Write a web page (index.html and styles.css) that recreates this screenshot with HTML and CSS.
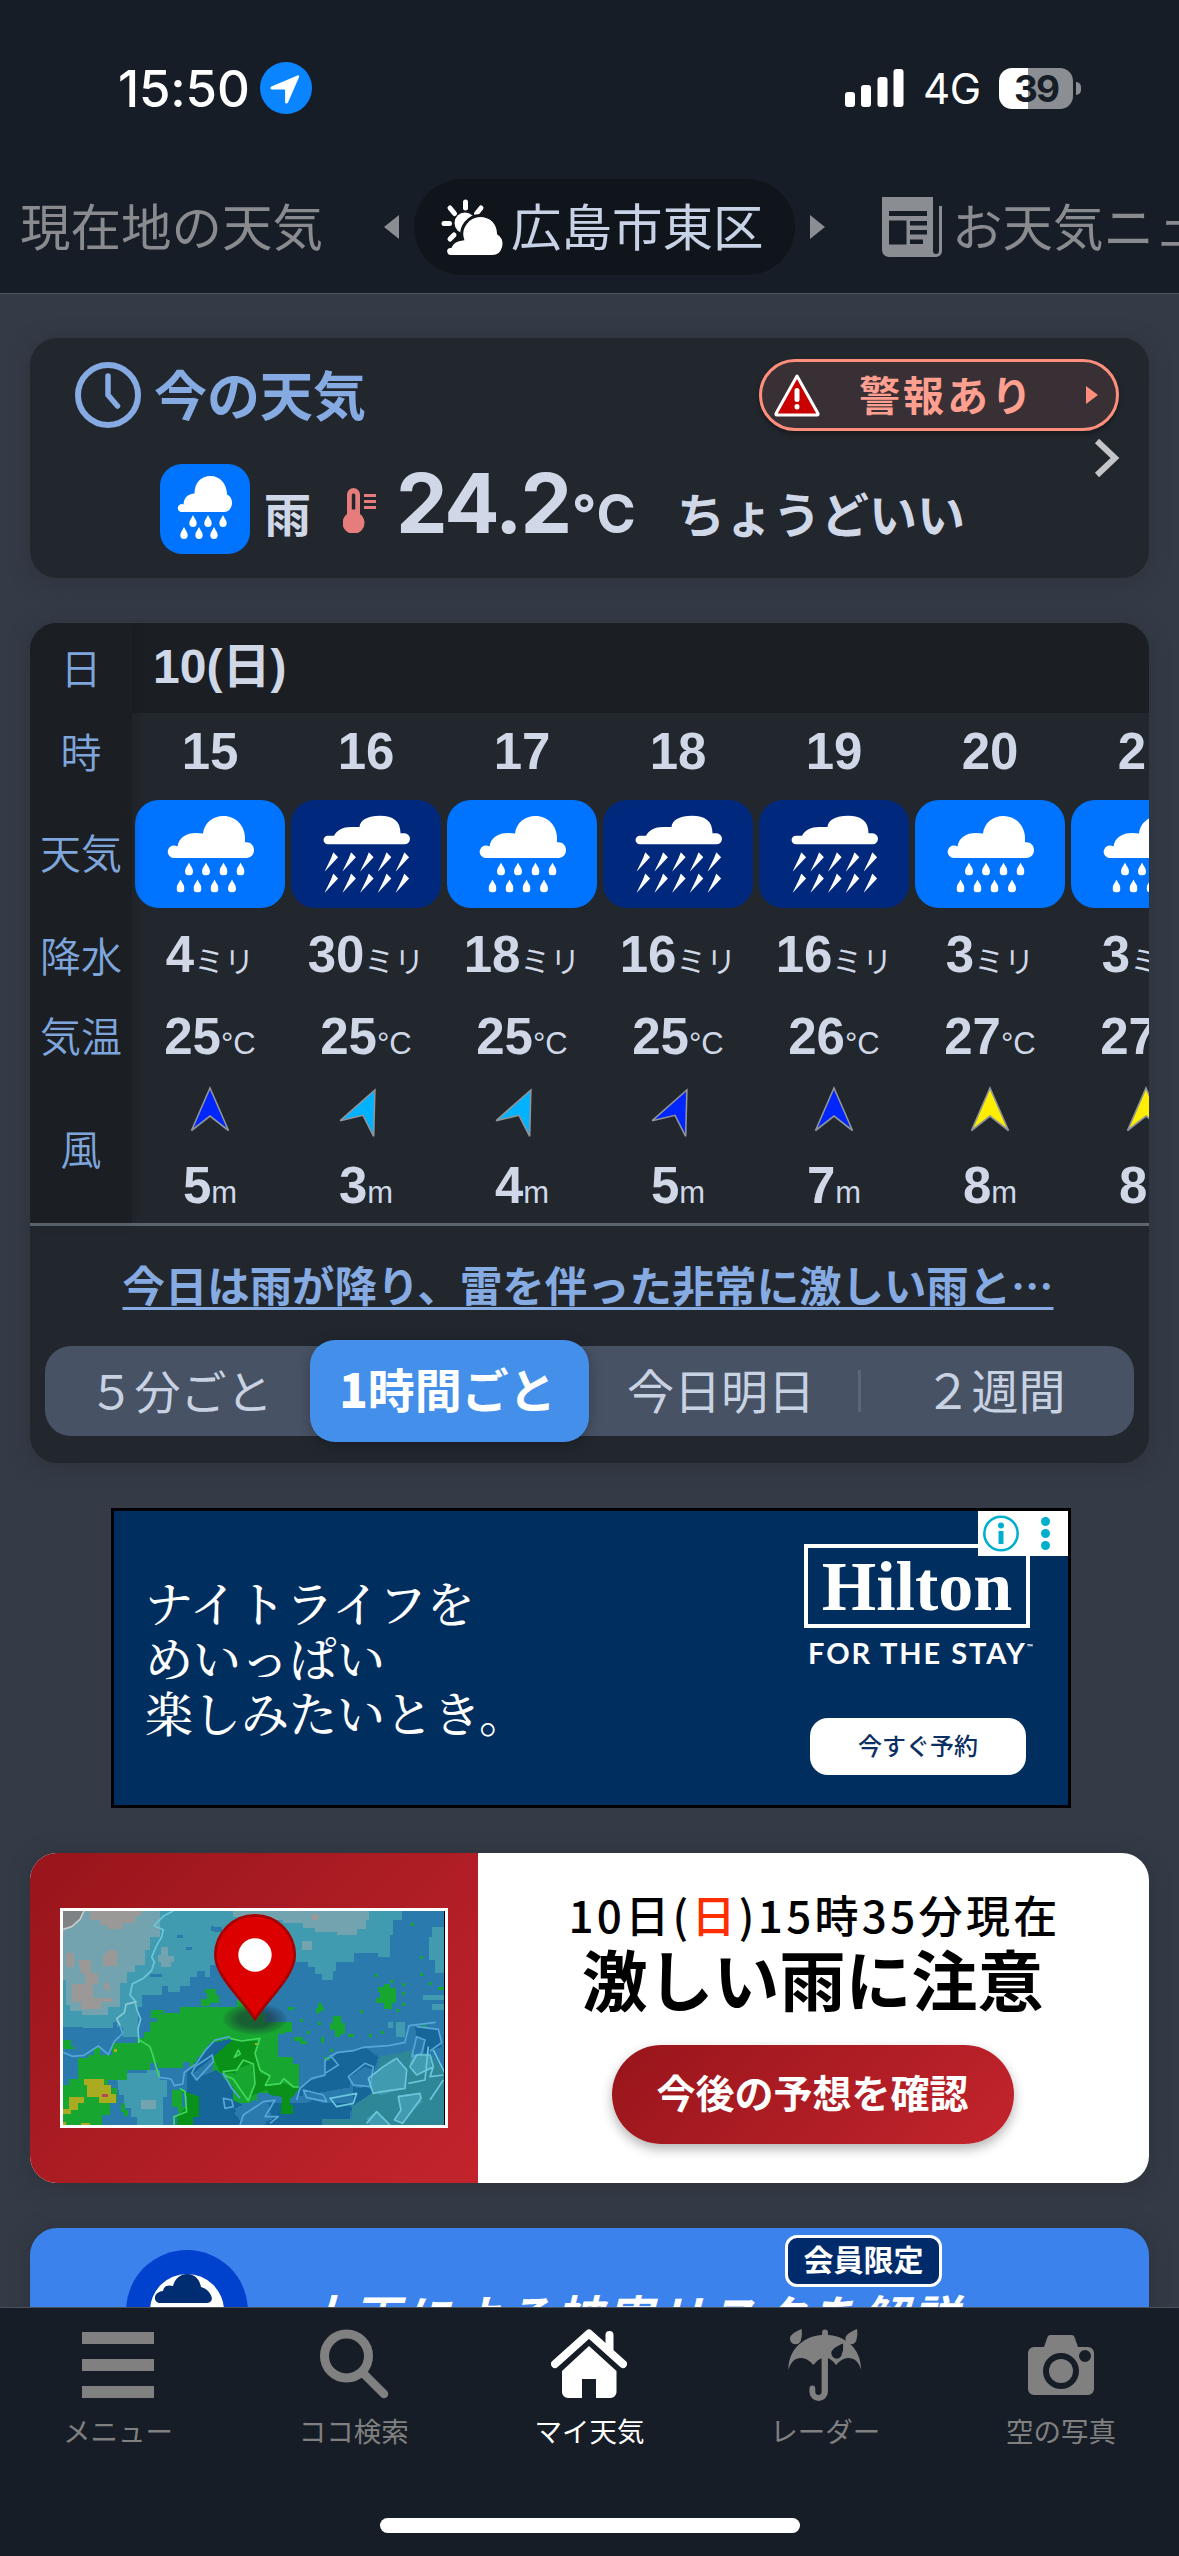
FILE: index.html
```html
<!DOCTYPE html>
<html lang="ja">
<head>
<meta charset="utf-8">
<title>マイ天気</title>
<link rel="stylesheet" href="styles.css">
</head>
<body>
<svg class="defs" width="0" height="0" aria-hidden="true">
  <symbol id="drop" viewBox="0 0 8 13"><path d="M4 0C5.5 3.500 8 5.500 8 9a4 4 0 0 1-8 0C0 5.500 2.500 3.500 4 0z"/></symbol>
  <symbol id="rain" viewBox="0 0 150 108">
    <path fill="#fff" d="M39.500 58a6.300 6.300 0 1 1 3-11.500C44 37.500 51 33 61 33q3.500 0 7 .6C69 23 78 16 88.500 16 101 16 110 26 110 38v4.200c5.500-.6 9 3 9 8s-4 7.800-8.500 7.800z"/>
    <g fill="#fff">
      <use href="#drop" x="50" y="62.500" width="8" height="13"/><use href="#drop" x="67" y="62.500" width="8" height="13"/><use href="#drop" x="84.500" y="62.500" width="8" height="13"/><use href="#drop" x="101.500" y="62.500" width="8" height="13"/>
      <use href="#drop" x="41.500" y="79.500" width="8" height="13"/><use href="#drop" x="58.500" y="79.500" width="8" height="13"/><use href="#drop" x="75.500" y="79.500" width="8" height="13"/><use href="#drop" x="93" y="79.500" width="8" height="13"/>
    </g>
  </symbol>
  <symbol id="bolt" viewBox="0 0 14 20"><path d="M8.800 0 13.600 5 0 19.500 6.500 6z"/></symbol>
  <symbol id="storm" viewBox="0 0 150 108">
    <path fill="#fff" d="M37.500 44.300a4.300 4.300 0 1 1 0-8.500h5.500C46 30 52 27 60 27h8.500C69 20 77 15.800 89 15.800c13 0 20.500 5.200 20.500 17.500h4a5.300 5.300 0 1 1 0 11z"/>
    <g fill="#fff">
      <use href="#bolt" x="33.500" y="52.300" width="14" height="20"/><use href="#bolt" x="51.300" y="52.300" width="14" height="20"/><use href="#bolt" x="69" y="52.300" width="14" height="20"/><use href="#bolt" x="86.700" y="52.300" width="14" height="20"/><use href="#bolt" x="104.500" y="52.300" width="14" height="20"/>
      <use href="#bolt" x="33.500" y="73.600" width="14" height="20"/><use href="#bolt" x="51.300" y="73.600" width="14" height="20"/><use href="#bolt" x="69" y="73.600" width="14" height="20"/><use href="#bolt" x="86.700" y="73.600" width="14" height="20"/><use href="#bolt" x="104.500" y="73.600" width="14" height="20"/>
    </g>
  </symbol>
  <symbol id="wind" viewBox="0 0 40 46"><path d="M20 2 38.500 44.500 20 30 1.500 44.500z" stroke="#8f9499" stroke-width="1.600"/></symbol>
</svg>

<header class="top">
  <div class="status">
    <span class="clock">15:50</span>
    <svg class="locate" width="52" height="52" viewBox="0 0 52 52"><circle cx="26" cy="26" r="26" fill="#0a84ff"/><path fill="#fff" d="M37.500 13.500c1.200-.5 2 .4 1.600 1.500L28 40.500c-.8 1.600-2.900 1.200-2.900-.6V28.500c0-.8-.3-1-1-1H12c-1.800 0-2.100-2.100-.6-2.900z"/></svg>
    <svg class="signal" width="59" height="38" viewBox="0 0 59 38" fill="#fff"><rect y="23" width="10" height="15" rx="3"/><rect x="16" y="16" width="10" height="22" rx="3"/><rect x="32.500" y="8" width="10" height="30" rx="3"/><rect x="48.500" width="10" height="38" rx="3"/></svg>
    <span class="network">4G</span>
    <div class="battery">39</div><i class="nub"></i>
  </div>
  <nav class="places">
    <span class="place first">現在地の天気</span>
    <svg class="prev" width="15" height="24" viewBox="0 0 15 24"><path fill="#8a8d92" d="M15 0v24L0 12z"/></svg>
    <span class="current">
      <svg width="62" height="56" viewBox="0 0 62 56">
        <g stroke="#fff" stroke-width="5" stroke-linecap="round"><path d="M24.500 3v6M9 9l4.500 5.500M40 9l-4.500 5.500M3 24.500h5.500M9 40l4-4"/></g>
        <circle cx="24" cy="24" r="10.500" fill="#fff"/>
        <path fill="#fff" stroke="#10151b" stroke-width="3" d="M10 57.500c-6 0-8-9.500-.5-10 2-4.500 6-7 12-7.500C18 28 28 16.500 39 16.500S57 24 57.500 34.500c10 7 5 23-6 23z"/>
      </svg>
      <b>広島市東区</b>
    </span>
    <svg class="next" width="15" height="24" viewBox="0 0 15 24"><path fill="#8a8d92" d="M0 0v24l15-12z"/></svg>
    <svg class="news" width="61" height="60" viewBox="0 0 61 60"><path fill="#8a8d92" fill-rule="evenodd" d="M0 0h51v54a3 3 0 0 0 6 0V9h3v45a6 6 0 0 1-6 6H7a7 7 0 0 1-7-7zM7 14v5h38v-5zM7 23.500v24h17.500v-24zM28 24v4.500h17V24zM28 33v4.500h17V33zM28 42.500V47h13v-4.500z"/></svg>
    <span class="place">お天気ニュース</span>
  </nav>
</header>

<main>
  <section class="card now">
    <div class="now-body">
      <div class="now-head">
        <svg width="66" height="66" viewBox="0 0 66 66" fill="none" stroke="#86abe2"><circle cx="33" cy="33" r="30" stroke-width="6"/><path d="M33 14v19l9.500 11" stroke-width="5.500" stroke-linecap="round"/></svg>
        <h2>今の天気</h2>
        <div class="alert">
          <svg width="48" height="44" viewBox="0 0 48 44"><path fill="#c80000" stroke="#fff" stroke-width="3" stroke-linejoin="round" d="M24 3 45 40.500a1 1 0 0 1-1 1.500H4a1 1 0 0 1-1-1.500z"/><path stroke="#fff" stroke-width="5" stroke-linecap="round" d="M24 17.500v9M24 33.500v.5"/></svg>
          <span>警報あり</span>
          <svg width="12" height="18" viewBox="0 0 12 18"><path fill="#ff8e7c" d="M0 0v18l12-9z"/></svg>
        </div>
      </div>
      <div class="now-line">
        <svg class="now-icon" width="90" height="90" viewBox="0 0 90 90" fill="#fff"><rect width="90" height="90" rx="22" fill="#0074ff"/><path d="M22 48a4 4 0 1 1 1.500-7.600C24 33.500 28 30 34.500 29.500 34.500 19 41 12 50.500 12S67 20 67 30.500c3.500 1.500 5 4.500 5 8.500 0 5-3.500 9-8 9z"/><use href="#drop" x="29" y="51" width="8" height="12"/><use href="#drop" x="44" y="51" width="8" height="12"/><use href="#drop" x="59" y="51" width="8" height="12"/><use href="#drop" x="20" y="63" width="8" height="12"/><use href="#drop" x="35" y="63" width="8" height="12"/><use href="#drop" x="50" y="63" width="8" height="12"/></svg>
        <span class="sky">雨</span>
        <svg class="thermo" width="34" height="45" viewBox="0 0 34 45"><path fill="#e67c7c" fill-rule="evenodd" d="M4 6.500a6.500 6.500 0 0 1 13 0V26a11 11 0 1 1-13 0zM8.800 7v14.500h3.500V7a1.800 1.800 0 0 0-3.500 0z"/><path stroke="#e67c7c" stroke-width="3" d="M21 7.500h12M21 13.500h12M21 19.500h12"/></svg>
        <span class="temp">24.2</span><span class="deg">°C</span>
        <span class="feel">ちょうどいい</span>
      </div>
    </div>
    <svg class="chev" width="26" height="40" viewBox="0 0 26 40"><path d="M3 3l18 17L3 37" fill="none" stroke="#c4c5c8" stroke-width="6"/></svg>
  </section>

  <section class="card forecast">
    <div class="table">
      <div class="labels"><span class="l-day">日</span><span class="l-hour">時</span><span class="l-sky">天気</span><span class="l-rain">降水</span><span class="l-temp">気温</span><span class="l-wind">風</span></div>
      <div class="hours">
        <div class="day">10(日)</div>
        <div class="cols">
          <div class="col"><b class="h">15</b><svg class="tile"><use href="#rain"/></svg><p class="r"><b>4</b>ミリ</p><p class="t"><b>25</b>°C</p><svg class="w blue"><use href="#wind"/></svg><p class="s"><b>5</b>m</p></div>
          <div class="col"><b class="h">16</b><svg class="tile dark"><use href="#storm"/></svg><p class="r"><b>30</b>ミリ</p><p class="t"><b>25</b>°C</p><svg class="w cyan tilt"><use href="#wind"/></svg><p class="s"><b>3</b>m</p></div>
          <div class="col"><b class="h">17</b><svg class="tile"><use href="#rain"/></svg><p class="r"><b>18</b>ミリ</p><p class="t"><b>25</b>°C</p><svg class="w cyan tilt"><use href="#wind"/></svg><p class="s"><b>4</b>m</p></div>
          <div class="col"><b class="h">18</b><svg class="tile dark"><use href="#storm"/></svg><p class="r"><b>16</b>ミリ</p><p class="t"><b>25</b>°C</p><svg class="w blue tilt"><use href="#wind"/></svg><p class="s"><b>5</b>m</p></div>
          <div class="col"><b class="h">19</b><svg class="tile dark"><use href="#storm"/></svg><p class="r"><b>16</b>ミリ</p><p class="t"><b>26</b>°C</p><svg class="w blue"><use href="#wind"/></svg><p class="s"><b>7</b>m</p></div>
          <div class="col"><b class="h">20</b><svg class="tile"><use href="#rain"/></svg><p class="r"><b>3</b>ミリ</p><p class="t"><b>27</b>°C</p><svg class="w yellow"><use href="#wind"/></svg><p class="s"><b>8</b>m</p></div>
          <div class="col"><b class="h">21</b><svg class="tile"><use href="#rain"/></svg><p class="r"><b>3</b>ミリ</p><p class="t"><b>27</b>°C</p><svg class="w yellow"><use href="#wind"/></svg><p class="s"><b>8</b>m</p></div>
        </div>
      </div>
    </div>
    <a class="summary">今日は雨が降り、雷を伴った非常に激しい雨と…</a>
    <div class="segments">
      <span class="seg s1">５分ごと</span><span class="seg on"><b>1</b>時間ごと</span><span class="seg s3">今日明日</span><i></i><span class="seg s4">２週間</span>
    </div>
  </section>

  <section class="ad">
    <p class="copy">ナイトライフを<br>めいっぱい<br>楽しみたいとき。</p>
    <div class="brand">
      <div class="logo">Hilton</div>
      <div class="tag">FOR THE STAY<sup>™</sup></div>
      <div class="book">今すぐ予約</div>
    </div>
    <svg class="adchoice" width="90" height="45" viewBox="0 0 90 45"><path fill="#fff" d="M0 0h90v45H0z"/><circle cx="23" cy="22.500" r="16.700" fill="none" stroke="#00aecd" stroke-width="2.600"/><circle cx="23" cy="14.500" r="3" fill="#00aecd"/><path fill="#00aecd" d="M20.500 20h5v13h-5z"/><g fill="#00aecd"><circle cx="67.500" cy="10.500" r="4.500"/><circle cx="67.500" cy="22.500" r="4.500"/><circle cx="67.500" cy="34.500" r="4.500"/></g></svg>
  </section>

  <section class="card warn">
    <div class="mapbox">
      <svg class="map" width="382" height="214" viewBox="129 213 1146 642" preserveAspectRatio="none">
        <g shape-rendering="crispEdges">
          <path fill="#2a7aad" d="M129 213h1146v642H129z"/>
          <path fill="#409bb0" d="M129 213H1146V240H1120V285H1110V350H1075V340H1003V366H948V393H938V420H905V402H885V380H865V366H829V330H780V300H620V340H585V375H570V411H555V393H530V411H510V438H480V456H445V438H425V465H365V500H340V535H300V545H280V565H190V560H129z"/>
          <path fill="#73a3ae" d="M129 213H420V290H390V330H375V375H345V395H320V430H300V500H265V525H185V512H150V495H138V420H129zM640 213H1048V240H1038V268H1012V285H950V276H885V265H850V250H790V240H740V230H640zM422 320h22v28h18v18h-10v15h-30v-15h-8v-22h8zM846 303h30v28h-30z"/>
          <path fill="#9a9998" d="M210 213H362V228H345V248H310V268H262V256H240V240H210zM262 330h28v48h-40v-36h12zM175 360h38v38h20v35h-15v42h60v-22h-12v-24h-15v20h28v36h-36v22h-60v-20h-27v-54h40v-30h-12zM138 340h25v42h-25zM877 222h18v18h-18z"/>
          <path fill="#7e8285" d="M129 213H193L180 240 155 260 129 268z"/>
          <path fill="#409bb0" d="M1237 260h38v140h-30v-40h-18v-70h10zM290 700h90v-10h40v30h20v50h-10v85H350V830h-18v-25h-20v-40h-15zM1128 545h28v45h-28zM1103 545h15v18h-15zM1210 465h65v15h-65zM1237 492h38v18h-38zM300 500h54v90H310v-30h-20v-30h10z"/>
          <path fill="#17a62f" d="M430 520H480V500H590V502H650V480H690V520H735V545H815V575H795V582H775V650H820V672H838V740H785V760H710V790H640V740H610V700H580V650H530V680H510V665H490V685H415V670H390V690H265V720H320V690H340V690H265V745H290V790H270V825H245V855H129V735H148V718H175V655H205V645H222V620H240V645H275V610H350V595H372V577H390V545H410V528z"/>
          <path fill="#17a62f" d="M555 448h32v18h10v22h-28v10h-25v-20h18v-18h-7zM1075 440h18v-8h18v12h18v46h-12v18h-26v-20h-24v-15h12v-18h-4zM938 528h26v20h12v34h-15v8h-16v-20h-15v-22h8zM893 490h12v12h6v12h-12v5h-12v-15h6zM1200 348h9v9h-9zM1172 248h9v9h-9zM1066 402h9v9h-9zM1110 420h9v9h-9zM1145 430h9v9h-9zM1200 400h9v9h-9zM1228 425h9v9h-9zM1254 440h18v9h-18zM1145 456h9v9h-9zM1145 490h9v9h-9zM1128 508h9v9h-9zM1020 510h9v9h-9zM803 502h18v8h-18zM840 536h9v9h-9zM860 573h9v9h-9zM895 545h9v9h-9zM903 590h9v18h-9zM822 590h28v14h12v9h-22v-9h-18zM985 582h18v9h-18zM1048 582h9v9h-9zM1083 572h9v9h-9zM930 626h9v9h-9zM912 652h18v9h-18zM1210 555h9v9h-9zM395 510h36v10h-12v15h-28zM129 600h24v20h12v8h-36zM455 750h30v50h20v20h-30v-20h-20zM305 790h10v20h10v18h-12v-12h-10z"/>
          <path fill="#176699" d="M500 700L570 610 640 595 640 625 600 655 580 650 530 715 590 690 640 745 640 780 680 800 640 820 680 855H500V790zM830 770L860 725 915 710 915 670 960 635 1040 625 1075 650 1060 700 990 710 990 740 1045 740 1060 765 1010 800 940 800 880 780 830 800 790 830 700 855H900L1000 810V740z"/>
          <path fill="#176699" d="M745 790H990V840H905V855H760zM1185 560l70 10 10 50-50 20-20-20z"/>
          <path fill="#2d8796" d="M1080 650l100-20 60 20 35 50v155H905V837h90V800l60-40z"/>
          <path fill="#0a9119" d="M580 650L640 598 715 605 705 640 720 700 750 710 740 740 790 730 838 745 815 775 750 765 740 750 690 770 690 720 640 700 600 700zM480 750l20 20v30l-30 30v25h50v-25h18v-60zM785 770h25v25h10v28h-36z"/>
          <path fill="#409bb0" d="M1060 700l60-45 40 30-5 60-75 20-35-25zM1180 640l50 10 5 40-50 10-15-30zM1135 765l65-5 5 25-60 65-25-10 20-25zM1040 835l30-20 40 40h-60z"/>
          <path fill="#2a7aad" d="M645 805l60-25 50 25-20 50h-70zM1190 590l25 10-5 40-30 10zM985 715l50-35 25 10-10 50-40 5zM850 755l60 10-10 20-50-10zM520 700l55-45 5 25-50 40z"/>
          <path fill="#17a62f" d="M645 690l50-20 8 70-15 50-30-30 10-20-20-30z"/>
          <path fill="#aaab20" d="M193 718h60v18h20v27h15v27h-50V772h-38v-36h-7zM146 772h45v18h-18v20h-20v12h-24v-15h17zM282 627h9v9h-9zM129 845h8v10h-8zM183 850h27v5h-27zM705 608h8v8h-8z"/>
          <path fill="#b04a50" d="M246 762h18v9h-18z"/>
          <path fill="#73a3ae" d="M362 780h45v28h-45z"/>
          <path fill="#2a7aad" d="M1228 303h-10v20h10zM498 320h18v9h-18zM470 285h18v9h-18zM573 258h9v14h-9zM582 275h24v-13h-24zM390 402h36v9h-36z"/>
        </g>
        <g fill="none" stroke-width="5" stroke-linejoin="round">
          <path stroke="#c8cbcc" d="M129 268l26-8 25-22 12-25"/>
          <path stroke="#6bc6dc" d="M460 213l-28 14-30 30 28 12-5 22-15 25-15 35 8 15-8 25-25 24-33 17-7 33 15 17 5 25 12 30-8 30 3 42"/>
          <path stroke="#8bc9d5" d="M350 485l-32 8-5 25-23 18 10 20"/>
          <path stroke="#56a6d8" d="M300 556l8 25-25 23-18 40-30-26-28 18-15 10-35 3-28-12"/>
          <path stroke="#41d85c" d="M355 598l35 22 10 30 8 30 10 30"/>
          <path stroke="#56a6d8" d="M418 712l35 5 10 20 25-5 5-35 35-25 27-40 30-32 45-10"/>
          <path stroke="#41d85c" d="M630 595l35 8 55-8-15 45 15 50 30 18-14 28 45-5 10-15 30 25 15 0M655 630l-12 22 18-10zM610 695l40-5 20-30 30 12 5 60-20 50-25-35-20-30-28-12zM480 745l15 10 5 60-38 15v25"/>
          <path stroke="#56a6d8" d="M515 700l10-20 52-35 3 20-50 55zM610 700l25 45 25 30M830 780l10-35 35-30 40-10 0-45 35-22 50-6 30-10 75-5 50-10 12-50 80-10M850 750l60 15 10 20-60-12zM610 775l25 5 5 20-25 5zM660 855l10-30 60-40 35-5-30 50 40 0-25 20M1190 590l25 10-10 40-30 10zM1190 560l65 8 10 40-35 25M985 710l50-40 25 10-10 60-50-5zM915 700l40-25-25-30"/>
          <path stroke="#6bc6dc" d="M1060 760l-15-45 45-35 40-25 30 35-5 55-70 10zM1170 680l20-35 40 0 10 35-50 25zM1240 630l35 70M1225 620l-10 100-50 10M1200 760l-65 10 8 40-20 30 25 10 55-75zM930 775l80-15-10 30-50 10zM1040 850l30-35 40 40M1240 680l-10 30 40-5M1230 780l40-60"/>
        </g>
        <path fill="#000" d="M1272 213h3v642h-3z"/>
        <radialGradient id="sh"><stop offset=".5" stop-color="#1b3038" stop-opacity=".6"/><stop offset="1" stop-color="#1b3038" stop-opacity=".1"/></radialGradient>
        <ellipse cx="705" cy="537" rx="96" ry="46" fill="url(#sh)"/>
        <path fill="#dc0000" stroke="#a60000" stroke-width="8" d="M705 537C670 480 586 410 586 345a119 119 0 0 1 238 0C824 410 740 480 705 537z"/>
        <circle cx="705" cy="345" r="50" fill="#fff"/>
      </svg>
    </div>
    <div class="notice">
      <p class="when">10日(<em>日</em>)15時35分現在</p>
      <p class="what">激しい雨に注意</p>
      <div class="more">今後の予想を確認</div>
    </div>
  </section>

  <section class="card promo">
    <svg class="promo-icon" width="122" height="122" viewBox="0 0 122 122"><circle cx="61" cy="61" r="61" fill="#0041cd"/><circle cx="61" cy="61" r="37" fill="#fff"/><path fill="#002d72" d="M33 53c-6-1-6-11 4-12 1-6 6-6 10-5 2-8 8-12 14-12 9 0 13 7 14 13 9 2 16 15 6 16z"/></svg>
    <div class="promo-text"><span class="badge">会員限定</span><p>大雨による被害リスクを解説</p></div>
  </section>
</main>

<footer>
  <div class="tabs">
    <div class="tab"><svg width="72" height="72" viewBox="0 0 72 72" fill="#808080"><path d="M0 3h72v12H0zM0 30h72v12H0zM0 57h72v12H0z"/></svg><span>メニュー</span></div>
    <div class="tab"><svg width="72" height="72" viewBox="0 0 72 72" fill="none" stroke="#808080"><circle cx="28.500" cy="27" r="22" stroke-width="9"/><path d="M45 44l21 21" stroke-width="8.500" stroke-linecap="round"/></svg><span>ココ検索</span></div>
    <div class="tab active"><svg width="76" height="72" viewBox="0 0 76 72" fill="#fff"><path d="M4 35 38 4.500 72 35" fill="none" stroke="#fff" stroke-width="8" stroke-linecap="round" stroke-linejoin="round"/><path d="M54.500 6a4 4 0 0 1 8 0v20l-8-7zM38 17 65.500 42v21a6 6 0 0 1-6 6H45V50H31v19H17a6 6 0 0 1-6-6V42z"/></svg><span>マイ天気</span></div>
    <div class="tab"><svg width="76" height="74" viewBox="0 0 76 74"><path fill="#808080" fill-rule="evenodd" d="M.5 42C0 21 17 6 38 6s37.500 15 37 36c-4-16-18-15-25.500-5-4-5-6-6-8.500-7v34.500a9.500 9.500 0 0 1-19 0V61a3 3 0 0 1 6 0v3.500a3.200 3.200 0 0 0 6.500 0V30c-3 1-5 3-8.500 7C18.500 27 4.500 26 .5 42zM56.500 15c-7 3-12 6-12 10a5.500 5.500 0 0 0 11 0c1.500-3 1.200-6 1-10z"/><path fill="#808080" d="M35 8V3.500a3 3 0 0 1 6 0V8zM14 0C7 3 2 6 2 10a5.700 5.700 0 0 0 11.500 0c1-3 .8-6 .5-10zM71 0C64 3 59 6 59 10a5.700 5.700 0 0 0 11.500 0c1-3 .8-6 .5-10z"/></svg><span>レーダー</span></div>
    <div class="tab"><svg width="66" height="72" viewBox="0 0 66 72"><path fill="#808080" fill-rule="evenodd" d="M6 18h10l3.500-10q.6-2 3-2h21q2.500 0 3 2L50 18h10a6 6 0 0 1 6 6v36a6 6 0 0 1-6 6H6a6 6 0 0 1-6-6V24a6 6 0 0 1 6-6zM33 24a18 18 0 1 0 0 36 18 18 0 0 0 0-36zM57 21a6 6 0 1 0 0 12 6 6 0 0 0 0-12z"/><circle cx="33" cy="42" r="12" fill="#808080"/></svg><span>空の写真</span></div>
  </div>
  <div class="home"></div>
</footer>
</body>
</html>
```
FILE: styles.css
```css
* { box-sizing: border-box; }
body {
  margin: 0; width: 1179px; height: 2556px; overflow: hidden;
  display: flex; flex-direction: column;
  background: #343b46; color: #d0d8e8;
  font-family: "Liberation Sans", "Noto Sans CJK JP", sans-serif;
}
h2, p { margin: 0; }
svg { display: block; flex: none; }
.defs { position: absolute; }

.top { height: 294px; flex: none; background: #161d26; border-bottom: 1px solid #50565e; }
.status { height: 176px; display: flex; align-items: center; padding: 0 98px 0 118px; color: #fff; font-family: Inter, sans-serif; }
.clock { width: 142px; font-size: 51px; font-weight: 550; letter-spacing: -.2px; white-space: nowrap; }
.signal { margin-left: auto; }
.network { width: 75px; padding-left: 19px; font-size: 42px; font-weight: 400; letter-spacing: -.5px; }
.battery { width: 74px; height: 41px; margin-left: 20px; border-radius: 13px; background: linear-gradient(90deg, #fff 29px, #8b8e93 29px); color: #161d26; text-align: center; font-size: 37px; line-height: 41px; font-weight: 700; letter-spacing: -2px; }
.nub { width: 5px; height: 13px; margin-left: 3px; background: #8b8e93; border-radius: 0 6px 6px 0; }
.places { height: 102px; display: flex; align-items: center; overflow: hidden; padding-left: 20px; color: #8a8b8f; font-family: "Noto Sans CJK JP", sans-serif; font-size: 50.500px; line-height: 94px; white-space: nowrap; }
.places > * { flex: none; }
.place { padding-bottom: 6px; }
.first { width: 364px; }
.current { display: flex; align-items: center; width: 381px; height: 96px; margin-left: 15px; padding-left: 27px; border-radius: 48px; background: #10151b; color: #c8d2e6; }
.current b { font-weight: 400; margin-left: 8px; padding-bottom: 6px; }
.next { margin-left: 15px; }
.news { margin: 0 9px 0 57px; }

main { flex: 1; min-height: 0; overflow: hidden; display: flex; flex-direction: column; gap: 45px; padding: 44px 30px 0; }
.card { flex: none; border-radius: 27px; overflow: hidden; background: #22272e; box-shadow: 0 3px 20px rgba(40, 40, 48, .5); }

.now { height: 240px; display: flex; align-items: center; justify-content: space-between; padding-right: 29px; }
.now-body { width: 1060px; height: 240px; padding: 21px 0 0 45px; }
.now-head { display: flex; align-items: center; height: 72px; width: 1044px; }
.now-head h2 { flex: 1; margin-left: 13px; color: #86abe2; font: 700 53px/66px "Noto Sans CJK JP", sans-serif; padding-bottom: 4px; }
.alert { flex: none; width: 360px; height: 72px; display: flex; align-items: center; padding: 0 0 0 11px; border: 3px solid #ff8e7c; border-radius: 36px; background: #393036; box-shadow: 0 3px 5px rgba(0, 0, 0, .35); }
.alert span { width: 227px; color: #ff9f8f; font: 700 41px/60px "Noto Sans CJK JP", sans-serif; letter-spacing: 3px; margin-left: 38px; padding-bottom: 5px; }
.now-line { display: flex; align-items: center; height: 90px; margin: 33px 0 0 85px; font-family: "Noto Sans CJK JP", sans-serif; line-height: 60px; white-space: nowrap; }
.sky { width: 63px; margin-left: 14px; font-size: 47px; font-weight: 700; padding-top: 6px; }
.thermo { margin: 3px 19px 0 16px; }
.temp { width: 176px; font: 700 82px/60px Inter, sans-serif; letter-spacing: -2px; padding-bottom: 11px; }
.deg { width: 105px; font: 700 53px/60px Inter, sans-serif; letter-spacing: 1px; padding-top: 9px; }
.feel { font-size: 48px; font-weight: 600; padding-top: 5px; }

.forecast { height: 840px; }
.table { display: flex; height: 603px; border-bottom: 3px solid #5d666f; }
.labels { flex: none; position: relative; z-index: 1; width: 102px; display: flex; flex-direction: column; background: #1b1f24; box-shadow: 2px 0 12px rgba(0, 0, 0, .15); color: #7fa6dc; font: 350 41px/50px "Noto Sans CJK JP", sans-serif; text-align: center; }
.labels span { display: flex; align-items: center; justify-content: center; padding-bottom: 9px; }
.l-day { height: 94px; }
.l-hour { height: 74px; }
.l-sky { height: 129px; }
.l-rain { height: 77px; }
.l-temp { height: 82px; }
.l-wind { flex: 1; }
.hours { flex: 1; min-width: 0; overflow: hidden; }
.day { height: 90px; padding-left: 21px; background: #1b1f24; font-size: 48px; font-weight: 700; line-height: 87px; }
.cols { display: flex; }
.col { flex: none; width: 156px; display: flex; flex-direction: column; align-items: center; font-size: 31px; white-space: nowrap; }
.col b { font-size: 51px; }
.h { height: 87px; line-height: 77px; }
.tile { width: 150px; height: 108px; border-radius: 24px; background: #0074ff; }
.tile.dark { background: #00297d; }
.r { height: 92px; line-height: 94px; font-size: 30px; }
.t { height: 71px; line-height: 73px; }
.w { width: 40px; height: 46px; margin: 15px 0 16px; }
.s { height: 75px; line-height: 75px; }
.blue { fill: #0025ff; }
.cyan { fill: #00b2ff; }
.yellow { fill: #ffee00; }
.tilt { transform: rotate(25deg); }

.summary { display: block; height: 114px; padding: 27px 3px 0 0; text-align: center; color: #86abe2; font: 600 42.400px/62px "Noto Sans CJK JP", sans-serif; white-space: nowrap; text-decoration: underline; text-decoration-thickness: 3px; text-underline-offset: 5px; }
.segments { display: flex; align-items: center; height: 90px; margin: 6px 15px 0; border-radius: 26px; background: #475264; color: #c8d2e2; font: 400 46px/80px "Noto Sans CJK JP", sans-serif; white-space: nowrap; }
.seg { text-align: center; padding-bottom: 4px; }
.s1 { width: 265px; padding-left: 6px; font-size: 46px; }
.on { width: 279px; height: 102px; line-height: 96px; border-radius: 25px; background: #438fea; color: #fff; font-weight: 700; font-size: 47px; padding-right: 4px; box-shadow: 0 3px 14px rgba(0, 0, 0, .25); }
.s3 { width: 269px; padding-right: 5px; font-size: 47px; }
.segments i { width: 3px; height: 42px; background: #5b6676; }
.s4 { flex: 1; padding-right: 5px; font-size: 47px; }

.ad { flex: none; position: relative; width: 960px; height: 300px; margin-left: 81px; display: flex; justify-content: space-between; border: 3px solid #000; background: #002e5f; color: #fff; }
.copy { margin: 67px 0 0 31px; font: 500 48px/55px "Liberation Serif", "Noto Serif CJK JP", "Noto Sans CJK JP", serif; }
.brand { width: 232px; margin-right: 32px; padding-top: 33px; }
.logo { width: 226px; height: 84px; border: 4px solid #fff; font: 700 70px/78px "Liberation Serif", serif; text-align: center; }
.tag { display: flex; margin: 9px 0 0 4px; font: 700 29px/32px Lato, sans-serif; letter-spacing: 1.900px; white-space: nowrap; }
.tag sup { font-size: 8px; line-height: 20px; letter-spacing: 0; }
.book { width: 216px; height: 57px; margin: 49px 0 0 6px; border-radius: 18px; background: #fff; color: #0c2f63; font: 500 24px/53px "Noto Sans CJK JP", sans-serif; text-align: center; }
.adchoice { position: absolute; right: 0; top: 0; }

.warn { height: 330px; display: flex; background: #fff; color: #000; font-family: "Noto Sans CJK JP", sans-serif; }
.mapbox { width: 448px; padding: 55px 30px; background: linear-gradient(135deg, #98151b, #c3242c); }
.map { box-sizing: content-box; border: 3px solid #fff; }
.notice { flex: 1; display: flex; flex-direction: column; align-items: center; padding: 29px 2px 0 0; white-space: nowrap; }
.when { font-size: 44px; font-weight: 500; line-height: 64px; letter-spacing: 3.300px; padding-left: 4px; }
.when em { color: #ff2e00; font-style: normal; }
.what { font-size: 66px; font-weight: 700; line-height: 66px; position: relative; top: -2px; }
.more { width: 402px; height: 99px; margin-top: 33px; border-radius: 50px; background: linear-gradient(135deg, #98151b, #c3242c); color: #fff; font-size: 39px; font-weight: 700; line-height: 92px; text-align: center; box-shadow: 0 5px 12px rgba(0, 0, 0, .3); }

.promo { height: 330px; display: flex; background: #3b82ec; }
.promo-icon { margin: 22px 0 0 96px; }
.promo-text { margin: 7px 0 0 38px; white-space: nowrap; }
.badge { display: block; width: 157px; height: 52px; margin-left: 499px; border: 3px solid #fff; border-radius: 12px; background: #002b6b; color: #fff; font: 700 30px/41px "Noto Sans CJK JP", sans-serif; text-align: center; }
.promo p { color: #fff; font: italic 700 46px/60px "Noto Sans CJK JP", sans-serif; letter-spacing: 5px; margin: -3px 0 0 16px; }

footer { height: 249px; flex: none; border-top: 1px solid #4b5159; background: #161d26; }
.tabs { display: flex; height: 210px; padding-top: 21px; }
.tab { flex: 1; display: flex; flex-direction: column; align-items: center; color: #808080; font: 400 27.500px/36px "Noto Sans CJK JP", sans-serif; }
.tab svg { height: 72px; }
.tab span { margin-top: 11px; }
.active { color: #fff; }
.home { width: 420px; height: 15px; margin: 0 auto; border-radius: 8px; background: #fff; }
```
